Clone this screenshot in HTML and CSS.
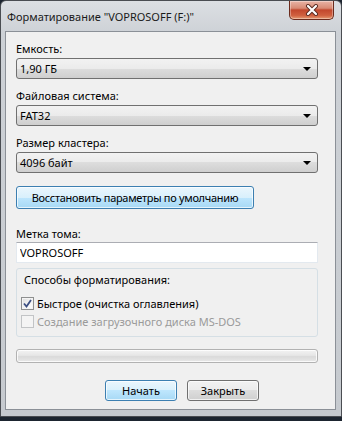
FILE: index.html
```html
<!DOCTYPE html>
<html lang="ru">

<head>
    <meta charset="UTF-8">
    <title>Форматирование</title>
    <link rel="stylesheet" href="styles.css">
</head>

<body>
    <div class="window">
        <!-- Title bar -->
        <div class="titlebar">
            <span class="title">Форматирование "VOPROSOFF (F:)"</span>
            <button type="button" class="close-btn" aria-label="Закрыть">
                <svg width="14" height="12" viewBox="0 0 14 12">
                    <path d="M3 2 L11 10 M11 2 L3 10" stroke="#5a2a20" stroke-width="4" stroke-linecap="round" />
                    <path d="M3 2 L11 10 M11 2 L3 10" stroke="#ffffff" stroke-width="2.2" stroke-linecap="round" />
                </svg>
            </button>
        </div>

        <!-- Dialog body -->
        <form class="content">
            <label class="field-label">Емкость:</label>
            <div class="combo"><span>1,90 ГБ</span><i class="arrow"></i></div>

            <label class="field-label">Файловая система:</label>
            <div class="combo"><span>FAT32</span><i class="arrow"></i></div>

            <label class="field-label">Размер кластера:</label>
            <div class="combo"><span>4096 байт</span><i class="arrow"></i></div>

            <button type="button" class="btn btn-blue restore-btn">Восстановить параметры по умолчанию</button>

            <label class="field-label volume-label" for="volume">Метка тома:</label>
            <input class="text-input" id="volume" type="text" value="VOPROSOFF">

            <fieldset class="group">
                <div class="group-title">Способы форматирования:</div>
                <div class="check-row">
                    <span class="check checked">
                        <svg width="9" height="9" viewBox="0 0 9 9">
                            <path d="M1 4.5 L3.5 7.5 L8 1" fill="none" stroke="#3c4f82" stroke-width="1.8" />
                        </svg>
                    </span>
                    <span>Быстрое (очистка оглавления)</span>
                </div>
                <div class="check-row disabled">
                    <span class="check"></span>
                    <span>Создание загрузочного диска MS-DOS</span>
                </div>
            </fieldset>

            <div class="progress"></div>

            <div class="actions">
                <button type="button" class="btn btn-blue">Начать</button>
                <button type="button" class="btn">Закрыть</button>
            </div>
        </form>
    </div>
</body>

</html>
```

FILE: styles.css
```css
body {
    margin: 0;
    padding: 0;
    background-color: #1d2530;
    font-family: "Noto Sans", "Open Sans", sans-serif;
    font-size: 11px;
    color: #000;
}

/* Outer window frame */
.window {
    width: 342px;
    height: 417px;
    box-sizing: border-box;
    border: 1px solid #4a4d52;
    border-radius: 6px 6px 0 0;
    background: linear-gradient(180deg, #dcdfe3 0%, #cdd1d6 8%, #c6cacf 100%);
    padding: 0 5px 0 4px;
}

.titlebar {
    height: 30px;
    display: flex;
    align-items: flex-start;
    justify-content: space-between;
    margin: 0 -5px 0 -4px;
}

.title {
    padding: 2px 0 0 6px;
    line-height: 28px;
    color: #1a1a1a;
}

.close-btn {
    width: 45px;
    height: 19px;
    margin-right: 7px;
    padding: 0;
    border: 1px solid #6b2b1d;
    border-top: none;
    border-radius: 0 0 5px 5px;
    background: linear-gradient(180deg, #e9b4a6 0%, #d88a74 40%, #c2472d 50%, #d0603f 80%, #e59a72 100%);
    box-shadow: inset 0 0 0 1px rgba(255, 255, 255, 0.35);
    display: flex;
    align-items: center;
    justify-content: center;
}

/* Dialog body */
.content {
    margin: 0;
    height: 379px;
    box-sizing: border-box;
    border: 1px solid #8b9097;
    background-color: #f0f0f0;
    padding: 9px 17px 0 10px;
    display: flex;
    flex-direction: column;
}

.field-label {
    display: block;
    line-height: 15px;
    height: 15px;
    margin-top: 9px;
}

.field-label:first-child {
    margin-top: 0;
}

.combo {
    margin-top: 2px;
    height: 21px;
    box-sizing: border-box;
    border: 1px solid #707070;
    border-radius: 3px;
    background: linear-gradient(180deg, #f2f2f2 0%, #ebebeb 50%, #dddddd 50%, #cfcfcf 100%);
    display: flex;
    align-items: center;
    justify-content: space-between;
    padding: 0 6px 0 3px;
}

.arrow {
    width: 0;
    height: 0;
    border-left: 4px solid transparent;
    border-right: 4px solid transparent;
    border-top: 4px solid #000;
}

.btn {
    font-family: inherit;
    font-size: 11px;
    color: #000;
    height: 21px;
    padding: 0;
    white-space: nowrap;
    border: 1px solid #707070;
    border-radius: 3px;
    background: linear-gradient(180deg, #f2f2f2 0%, #ebebeb 50%, #dddddd 50%, #cfcfcf 100%);
    box-shadow: inset 0 0 0 1px rgba(255, 255, 255, 0.7);
}

.btn-blue {
    border-color: #3c7fb1;
    background: linear-gradient(180deg, #eaf6fd 0%, #d9f0fc 50%, #bee6fd 50%, #a7d9f5 100%);
}

.restore-btn {
    margin-top: 13px;
    width: 238px;
    height: 23px;
    letter-spacing: -0.3px;
}

.volume-label {
    margin-top: 17px;
}

.text-input {
    margin-top: 1px;
    height: 21px;
    box-sizing: border-box;
    border: 1px solid #e3e9ef;
    border-top-color: #abadb3;
    background: #fff;
    font-family: inherit;
    font-size: 11px;
    padding: 0 3px;
    outline: none;
}

/* Format options group */
.group {
    margin: 5px 0 0;
    padding: 3px 4px 7px;
    border: 1px solid #d5dfe5;
    border-radius: 3px;
    min-width: 0;
}

.group-title {
    line-height: 15px;
    margin-left: 3px;
}

.check-row {
    display: flex;
    align-items: center;
    gap: 3px;
    height: 16px;
    margin-top: 8px;
}

.check-row + .check-row {
    margin-top: 2px;
}

.check {
    width: 13px;
    height: 13px;
    box-sizing: border-box;
    border: 1px solid #8e8f8f;
    background: linear-gradient(135deg, #dcdcdc 0%, #f6f6f6 60%, #ffffff 100%);
    box-shadow: inset 0 0 0 1px #f4f4f4;
    display: flex;
    align-items: center;
    justify-content: center;
}

.check-row.disabled {
    color: #9a9a9a;
}

.check-row.disabled .check {
    border-color: #c2c4c6;
    background: #f4f4f4;
}

.progress {
    margin-top: 12px;
    height: 14px;
    box-sizing: border-box;
    border: 1px solid #b2b2b2;
    border-radius: 3px;
    background: linear-gradient(180deg, #f3f3f3 0%, #e6e6e6 45%, #dadada 55%, #e8e8e8 100%);
    box-shadow: inset 0 0 0 1px rgba(255, 255, 255, 0.8);
}

.actions {
    margin-top: 17px;
    display: flex;
    gap: 10px;
    padding-left: 89px;
}

.actions .btn {
    width: 72px;
}
```
